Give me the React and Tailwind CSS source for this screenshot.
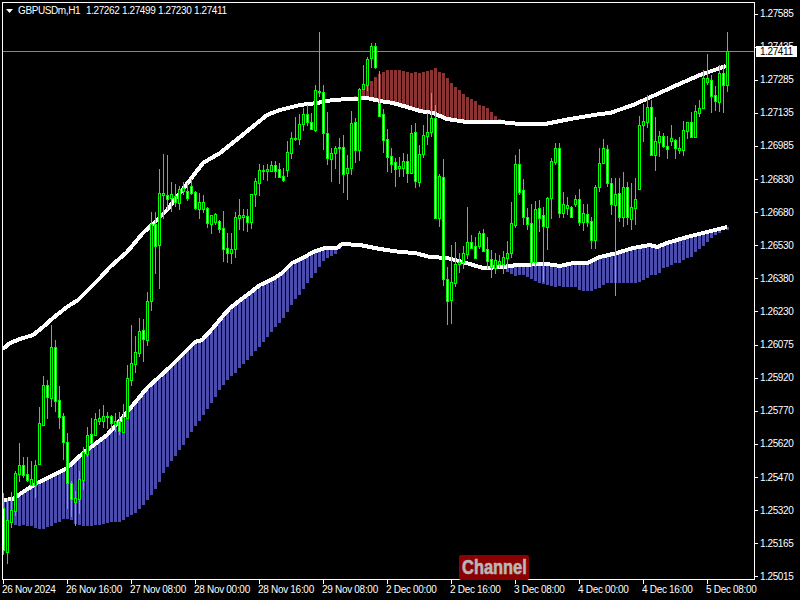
// GBPUSD H1 chart
const FONT = "font-['Liberation_Sans',sans-serif]";

const prices = ['1.27585', '1.27435', '1.27285', '1.27135', '1.26985', '1.26830', '1.26680', '1.26530', '1.26380', '1.26230', '1.26075', '1.25920', '1.25770', '1.25620', '1.25470', '1.25320', '1.25165', '1.25015'];
const times = ['26 Nov 2024', '26 Nov 16:00', '27 Nov 08:00', '28 Nov 00:00', '28 Nov 16:00', '29 Nov 08:00', '2 Dec 00:00', '2 Dec 16:00', '3 Dec 08:00', '4 Dec 00:00', '4 Dec 16:00', '5 Dec 08:00'];

// high, low, body top, body bottom, filled - one bar every 4px from x=3
const candles = [
  [493,555,508,550,1],[498,564,520,552,0],[492,528,510,522,0],[471,516,473,511,0],[443,482,465,474,0],[457,478,465,475,1],[457,482,474,480,1],[461,485,479,485,0],
  [460,498,465,485,0],[407,465,423,464,0],[376,425,385,425,0],[380,419,385,397,1],[325,407,347,398,0],[340,412,347,401,1],[386,429,400,417,1],[413,460,416,442,1],
  [433,509,442,483,1],[481,517,483,499,1],[491,526,498,502,0],[471,514,479,499,0],[447,490,452,480,0],[427,457,435,454,0],[418,444,434,443,1],[413,436,419,435,0],
  [409,425,418,421,0],[405,428,416,421,0],[412,429,416,417,0],[415,430,416,423,1],[413,432,421,424,0],[412,435,421,431,1],[404,433,417,432,0],[365,418,378,418,0],
  [325,386,363,380,0],[336,373,352,364,0],[318,357,331,353,0],[319,362,330,339,1],[292,346,301,340,0],[212,311,224,301,0],[212,274,224,246,1],[169,289,193,245,0],
  [154,219,193,195,0],[155,210,195,199,1],[182,212,194,198,0],[184,207,196,202,1],[186,210,189,203,0],[182,195,188,191,0],[183,201,191,198,1],[179,195,186,193,1],
  [191,210,192,208,1],[193,219,202,209,0],[195,213,202,209,0],[207,228,208,223,1],[215,234,215,224,0],[213,225,214,222,0],[220,233,221,229,1],[211,262,228,249,1],
  [233,263,248,253,1],[233,264,249,253,0],[212,258,217,249,0],[199,230,215,218,0],[209,231,215,217,0],[209,232,216,222,1],[194,229,194,222,0],[178,207,181,194,0],
  [164,196,170,183,0],[165,180,170,171,0],[164,181,169,171,0],[161,172,165,171,0],[161,178,165,171,1],[163,178,169,177,1],[168,182,176,180,1],[141,177,152,170,0],
  [132,159,138,153,0],[117,141,138,139,0],[114,145,124,139,0],[108,131,114,124,0],[105,126,114,122,1],[113,130,122,129,1],[85,132,90,130,0],[32,97,91,92,0],
  [85,150,92,133,1],[112,165,133,158,1],[148,182,153,159,0],[146,169,148,153,0],[138,184,147,148,0],[135,193,147,174,1],[155,200,168,173,0],[111,175,123,168,0],
  [118,163,122,150,1],[88,161,89,150,0],[65,90,84,89,0],[57,91,59,85,0],[43,68,46,58,0],[43,69,46,67,1],[71,117,103,116,1],[109,153,114,140,1],
  [129,172,139,157,1],[148,173,156,164,1],[158,187,162,169,1],[157,177,166,168,0],[153,177,161,168,0],[154,183,161,173,1],[125,173,133,173,0],[123,188,132,181,1],
  [145,187,154,182,0],[125,158,135,154,0],[113,145,132,136,0],[93,137,118,132,0],[105,218,118,218,1],[174,227,176,218,0],[159,286,177,279,1],[267,325,279,301,1],
  [245,324,282,300,0],[242,287,264,283,0],[253,273,262,264,0],[246,269,253,262,0],[207,259,242,254,0],[235,249,242,248,1],[237,258,246,258,1],[231,249,233,246,0],
  [229,252,233,251,1],[237,269,249,261,1],[250,278,259,267,1],[253,274,260,268,0],[255,268,261,264,0],[251,274,257,264,0],[241,268,253,258,0],[202,258,223,253,0],
  [155,228,164,225,0],[149,195,164,192,1],[179,225,190,217,1],[208,230,217,224,1],[204,267,223,262,1],[201,267,209,262,0],[200,232,208,218,1],[207,282,215,226,1],
  [197,250,198,227,0],[158,219,161,198,0],[143,165,148,162,0],[143,218,148,213,1],[192,218,204,213,0],[197,215,205,208,0],[206,217,207,217,1],[195,207,199,204,0],
  [189,226,199,222,1],[204,231,213,222,0],[204,227,214,222,1],[217,249,221,240,1],[185,249,187,240,0],[148,192,163,187,0],[139,163,148,163,0],[145,187,149,183,1],
  [178,215,183,204,1],[178,296,194,205,0],[178,222,193,217,1],[172,227,187,217,0],[182,225,187,217,1],[183,230,207,219,0],[178,225,199,208,0],[116,189,125,189,0],
  [104,142,121,125,0],[95,128,107,122,0],[100,155,107,155,1],[117,171,141,155,0],[131,157,136,142,0],[133,148,136,146,1],[136,159,146,149,1],[125,146,138,141,0],
  [139,159,140,148,1],[137,154,148,150,0],[121,156,130,150,0],[122,139,122,131,0],[112,138,122,137,1],[105,138,111,137,0],[100,117,108,113,0],[70,108,78,108,0],
  [54,85,78,82,0],[75,113,80,96,1],[86,111,95,101,1],[65,112,73,102,0],[65,113,73,85,1],[32,92,51,85,0],
];

const upper = [[3,349],[10,343],[20,339],[33,335],[43,327],[53,318],[67,307],[78,300],[100,278],[110,267],[127,252],[143,233],[155,222],[167,210],[183,189],[203,163],[220,153],[240,137],[267,115],[280,110],[300,105],[317,103],[333,100],[367,98],[380,101],[393,103],[407,107],[420,111],[433,113],[447,119],[467,122],[500,122],[520,124],[545,124],[570,119],[600,114],[610,113],[633,105],[653,96],[677,85],[700,75],[726,66]];
const lower = [[3,500],[13,499],[23,492],[37,483],[50,477],[67,468],[83,453],[107,435],[123,417],[147,388],[170,367],[187,350],[195,342],[202,340],[213,328],[222,317],[230,308],[247,295],[260,285],[273,279],[282,273],[292,263],[303,258],[313,252],[325,248],[337,248],[342,244],[360,245],[380,249],[400,252],[415,253],[430,257],[447,258],[463,262],[483,268],[503,267],[517,265],[547,264],[560,266],[573,263],[587,263],[600,257],[617,253],[633,248],[650,245],[657,247],[667,243],[687,237],[707,232],[727,227]];

// bottoms of the blue histogram, x=3..339 and x=503..727
const blueLeft = [520,520,520,525,526,525,526,526,528,529,529,527,526,523,522,519,519,520,524,525,526,526,526,525,525,524,523,522,522,522,520,517,515,513,509,505,500,495,489,482,473,467,461,456,450,445,438,432,426,421,415,409,403,397,390,385,380,376,373,368,364,360,356,351,347,342,337,332,327,323,318,312,305,299,295,289,283,278,273,267,261,258,256,254,249];
const blueRight = [268,272,274,276,275,275,277,279,281,283,284,285,286,287,286,287,287,287,287,290,291,291,291,289,288,285,283,283,283,283,283,283,283,283,282,280,278,275,275,273,268,267,265,263,263,260,258,257,252,249,246,242,238,235,233,229,230];
// tops of the red histogram, x=355..499
const redTops = [96,90,85,84,81,77,74,72,70,70,70,70,71,72,73,72,73,72,71,70,68,72,73,78,83,87,90,94,97,99,101,105,106,108,112,116,119];

function lineY(points, x) {
  for (let i = 1; i < points.length; i++) {
    const [x0, y0] = points[i - 1];
    const [x1, y1] = points[i];
    if (x <= x1) return y0 + ((y1 - y0) * (x - x0)) / (x1 - x0);
  }
  return points[points.length - 1][1];
}

const toPoints = (points) => points.map((p) => p.join(',')).join(' ');

function Chart() {
  return (
    <svg viewBox="3 3 751 576" shapeRendering="crispEdges" className="block w-[751px] h-[576px]">
      {blueLeft.map((bottom, i) => {
        const x = 3 + i * 4;
        const top = Math.round(lineY(lower, x));
        return <rect key={x} x={x - 1} y={top} width="3" height={Math.max(bottom - top, 0)} fill="#4b4bab" />;
      })}
      {blueRight.map((bottom, i) => {
        const x = 503 + i * 4;
        const top = Math.round(lineY(lower, x));
        return <rect key={x} x={x - 1} y={top} width="3" height={Math.max(bottom - top, 0)} fill="#4b4bab" />;
      })}
      {redTops.map((top, i) => {
        const x = 355 + i * 4;
        const bottom = Math.round(lineY(upper, x));
        return <rect key={x} x={x - 1} y={top} width="3" height={Math.max(bottom - top, 0)} fill="#8b3333" />;
      })}
      <polyline points={toPoints(upper)} fill="none" stroke="#fff" strokeWidth="4" />
      <polyline points={toPoints(lower)} fill="none" stroke="#fff" strokeWidth="4" />
      <rect x="3" y="51" width="751" height="1" fill="#808890" />
      {candles.map(([high, low, top, bottom, filled], i) => {
        const x = 3 + i * 4;
        return (
          <g key={x}>
            <rect x={x} y={high} width="1" height={low - high} fill="#00ff00" />
            <rect x={x - 1} y={top} width="3" height={bottom - top + 1} fill="#00ff00" />
            {bottom - top > 1 && <rect x={x} y={top + 1} width="1" height={bottom - top - 1} fill={filled ? '#fff' : '#000'} />}
          </g>
        );
      })}
    </svg>
  );
}

function Legend() {
  return (
    <div className="absolute left-0 top-[1px] flex items-center h-[13px] text-white text-[10px] tracking-[-0.4px] whitespace-nowrap">
      <svg width="7" height="4" viewBox="0 0 7 4" className="ml-[3px] mr-[5px]">
        <polygon points="0,0 7,0 3.5,4" fill="#fff" />
      </svg>
      <span className="w-[68px]">GBPUSDm,H1</span>
      <div className="flex gap-[3px]">
        {['1.27262', '1.27499', '1.27230', '1.27411'].map((v) => (
          <span key={v} className="w-[33px]">{v}</span>
        ))}
      </div>
    </div>
  );
}

export default function App() {
  return (
    <div className={`relative flex w-[800px] h-[600px] overflow-hidden bg-black text-white text-[10px] leading-[12px] tracking-[-0.3px] ${FONT}`}>
      <div className="flex flex-col w-[755px] pl-[2px] pt-[2px]">
        <div className="relative w-[753px] h-[578px] border border-white">
          <Chart />
          <Legend />
          <div className="absolute left-[456px] bottom-[-1px] flex items-center justify-center w-[70px] h-[25px] rounded-[2px] bg-[#8b0000]">
            <span className="inline-block scale-x-[0.82] font-bold text-[20px] leading-[25px] tracking-normal text-[#b8b8b8] [-webkit-text-stroke:0.6px_#b8b8b8]">Channel</span>
          </div>
        </div>
        <div className="flex pl-px">
          {times.map((t) => (
            <div key={t} className="flex flex-col w-[64px] shrink-0">
              <div className="w-px h-[4px] bg-white" />
              <span className="-ml-px whitespace-nowrap">{t}</span>
            </div>
          ))}
        </div>
      </div>
      <div className="flex flex-col justify-between flex-1 pt-[8px] pb-[17px] tracking-[-0.4px]">
        {prices.map((p) => (
          <div key={p} className="flex items-center h-[12px]">
            <div className="w-[3px] h-px bg-white mr-[2px]" />
            <span>{p}</span>
          </div>
        ))}
      </div>
      <div className="absolute left-[756px] top-[46px] w-[41px] h-[11px] pl-[4px] bg-white text-black leading-[11px] tracking-[-0.4px]">1.27411</div>
    </div>
  );
}
